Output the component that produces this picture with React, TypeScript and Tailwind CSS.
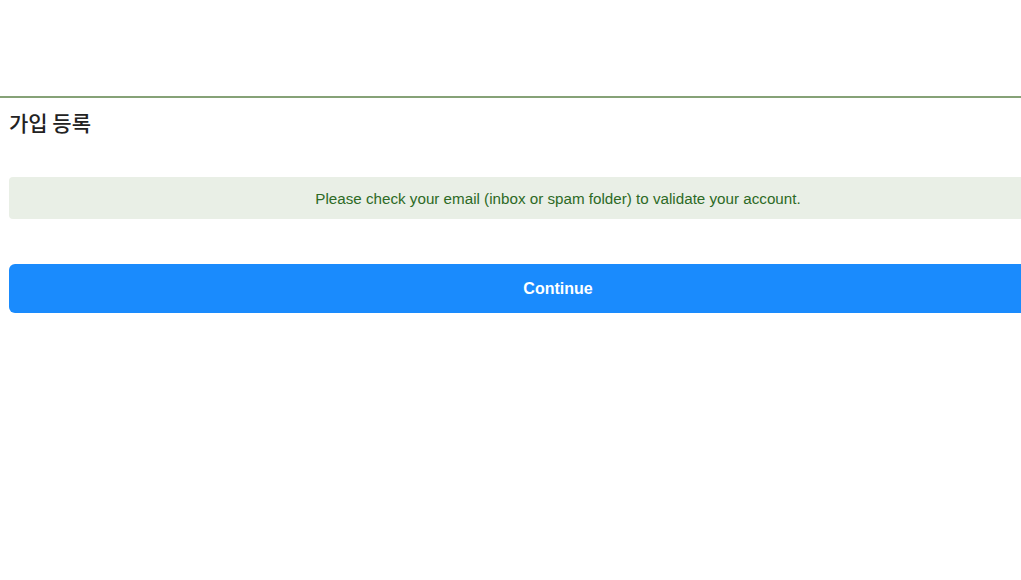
import React from 'react';

const App: React.FC = () => {
    return (
        <div className="min-h-[580px] bg-white overflow-hidden font-['Helvetica','Liberation_Sans','Noto_Sans_CJK_KR',sans-serif]">
            <div className="h-[96px]"></div>
            <div className="h-[2px] bg-[#86a277] w-[1120px]"></div>
            <div className="w-[1098px] ml-[9px]">
                <h1 className="mt-[10px] text-[21px] leading-[28px] font-medium text-[#222] font-['Noto_Sans_CJK_KR',sans-serif]">
                    가입 등록
                </h1>
                <div className="mt-[41px] h-[42px] pt-[3px] rounded-[4px] bg-[#e9efe6] flex items-center justify-center text-[15.2px] text-[#2d6a25]">
                    Please check your email (inbox or spam folder) to validate your account.
                </div>
                <button className="mt-[45px] w-full h-[49px] rounded-[6px] bg-[#1a8bfd] text-white text-[16px] font-bold">
                    Continue
                </button>
            </div>
        </div>
    );
};

export default App;
